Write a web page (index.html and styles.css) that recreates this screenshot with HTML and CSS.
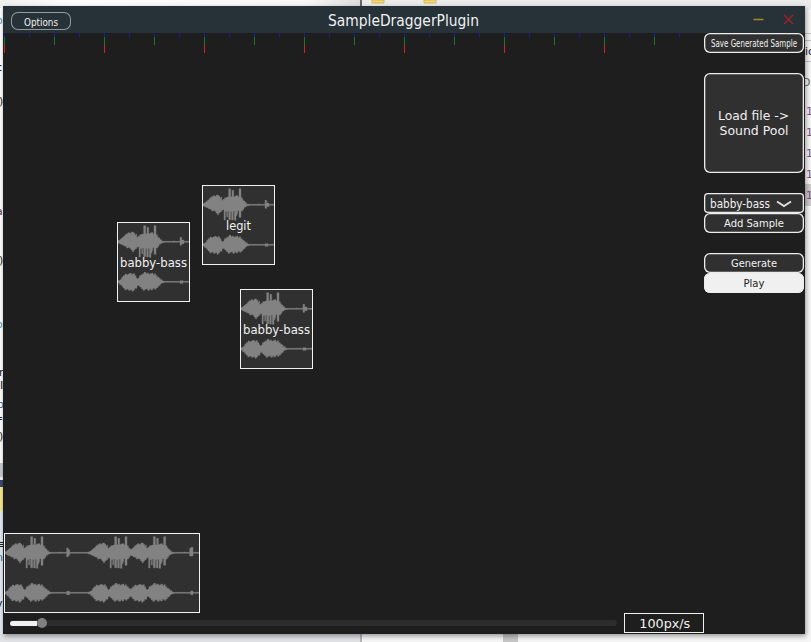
FILE: index.html
```html
<!DOCTYPE html>
<html lang="en">
<head>
<meta charset="utf-8">
<title>SampleDraggerPlugin</title>
<link rel="stylesheet" href="styles.css">
</head>
<body>
<svg class="backdrop" width="811" height="642" aria-hidden="true">
  <defs>
    <linearGradient id="sky" x1="0" x2="1" y1="0" y2="0"><stop offset="0" stop-color="#f0f0f0"/><stop offset=".2" stop-color="#fefefe"/><stop offset=".85" stop-color="#f8f8f8"/><stop offset="1" stop-color="#ddd"/></linearGradient>
  </defs>
  <rect width="811" height="642" fill="#f6f6f7"/>
  <rect width="360" height="8" fill="url(#sky)"/>
  <rect x="362" width="449" height="10" fill="#ebebeb"/>
  <path d="M361 0V8" stroke="#666" stroke-width="2"/>
  <path d="M361 634V642" stroke="#777" stroke-width="1"/>
  <path d="M372 0h12v3h-12zM424 0h12v3h-12z" fill="#f4d878" stroke="#d8b85a"/>
  <path d="M0 8h3v455H0z" fill="#fff"/>
  <path d="M0 463h3v14H0z" fill="#c9cbd3"/>
  <path d="M0 480h3v7H0z" fill="#3c4a70"/>
  <path d="M0 487h3v24H0z" fill="#f8ea88"/>
  <path d="M0 511h3v131H0z" fill="#e2ebf4"/>
  <path d="M0 634h360v8H0z" fill="#e2e3e7"/>
  <path d="M503 634h15v8h-15z" fill="#c6c6c6"/>
  <path d="M805 33.5h6M805 40.5h6M805 61.5h6" stroke="#c5c5c5"/>
  <path d="M805 184h6v22h-6z" fill="#ccc"/>
  <g class="fragments">
    <text x="-4" y="24" fill="#4a97b5">o</text><text x="-4" y="71">c</text><text x="-1" y="105">)</text>
    <text x="-4" y="215" fill="#633">a</text><text x="-1" y="264">)</text><text x="-4" y="328" fill="#4a97b5">o</text>
    <text x="-1" y="376">r</text><text x="0" y="389">I</text><text x="-3" y="408" fill="#36a">b</text><text x="-6" y="422">=</text><text x="-1" y="440">)</text>
    <text x="-4" y="548">≡</text><text x="-4" y="561" fill="#379">n</text><text x="-4" y="607">v</text>
    <text x="805" y="55">ic</text><text x="802" y="86" fill="#666">Da</text>
    <g fill="#855078"><text x="806" y="115">1</text><text x="806" y="136">1</text><text x="806" y="157">1</text><text x="806" y="178">1</text><text x="806" y="199">1</text></g>
  </g>
</svg>

<svg class="defs" aria-hidden="true">
  <defs>
    <path id="burst-top" d="M0 58 8 54 15 48 23 42 24 38H28V35H33V32H38V34H43V30H50V34H54V40H57V36H59V46H63V43H68V38H75V36H80V11H86V35H90V16H95V36H98V33H102V32H108V36H111V11H117V38H121V44H124V48H129V53H134V57L142 59V61L134 63 130 67H126V73H122V78H117V97H111V77H107V86H105V92H102V106H97V79H94V105H89V80H86V104H80V78H77V96H74V80H70V105H66V74H62V76H59V80H54V84H50V89H46V84H42V79H38V76H34V78H29V73H24V71H19V68H13V66H8V63H0Z"/>
    <path id="burst-low" d="M0 178 8 175 14 171V166H18V161H24V156H29V159H33V156H38V154H43V157H48V155H53V161H57V166L62 171 67 166V161H72V158H77V155H81V151H87V155H91V153H95V157H99V155H104V153H108V158H112V155H116V161H121V166H126V169H130V173H136V177L142 179V181L136 183 130 186V190H126V193H122V198H117V202H113V199H107V204H102V200H98V205H92V200H88V202H83V205H78V200H73V195H68V191L62 190 60 194V199H53V204H49V208H45V203H40V205H34V201H29V203H23V198H18V193H14V188H8V184L0 182Z"/>
    <symbol id="sample-wave" viewBox="0 0 219 240">
      <use href="#burst-top"/><use href="#burst-low"/>
      <path d="M138 58H168V57H173V58H189V46H194V54H201V58H219V61H201V65H194V70H189V61H138ZM138 178H189V176H198V178H219V181H198V184H189V181H138Z"/>
    </symbol>
    <symbol id="mix-wave" viewBox="0 0 588 240">
      <use href="#burst-top"/><use href="#burst-low"/>
      <path d="M138 58H168V57H173V58H188V45H193V50H197V58H252V61H197V67H193V71H188V61H138ZM138 178H188V175H197V178H252V181H197V185H188V181H138Z"/>
      <use href="#burst-top" x="252"/><use href="#burst-low" x="252"/>
      <use href="#burst-top" x="368"/><use href="#burst-low" x="368"/>
      <path d="M504 58H540V57H544V58H557V46H561V43H567V58H588V61H567V69H557V61H504ZM504 178H560V174H567V178H588V181H567V185H560V181H504Z"/>
    </symbol>
    <pattern id="ticks" width="100" height="22" patternUnits="userSpaceOnUse">
      <path d="M0 0h1v4H0zM25 0h1v4h-1zM50 0h1v4h-1zM75 0h1v4h-1z" fill="#1a18ae"/>
      <path d="M12 0h1v2h-1zM19 0h1v2h-1zM37 0h1v2h-1zM62 0h1v2h-1zM87 0h1v2h-1z" fill="#1a184c"/>
      <path d="M0 4h1v8H0zM50 4h1v8h-1z" fill="#147c20"/>
      <path d="M0 12h1v8H0z" fill="#d52027"/>
    </pattern>
  </defs>
</svg>

<main class="window">
  <header class="titlebar">
    <button class="btn options"><svg class="label"><text x="50%" y="13.5" textLength="34" lengthAdjust="spacingAndGlyphs">Options</text></svg></button>
    <h1 class="title"><svg class="label"><text x="50%" y="20" textLength="151" lengthAdjust="spacingAndGlyphs">SampleDraggerPlugin</text></svg></h1>
    <svg class="controls" width="44" height="16"><path d="M1.5 13.5H11.500" stroke="#a58c1c" stroke-width="1.5"/><path d="M32 9 41 18M41 9 32 18" stroke="#a91e2b" stroke-width="1.3"/></svg>
  </header>

  <div class="body">
    <section class="canvas">
      <svg class="ruler" width="700" height="22"><rect width="700" height="22" fill="url(#ticks)"/></svg>
      <div class="clip clip-a"><svg class="wave"><use href="#sample-wave"/></svg><svg class="label"><text x="50%" y="45" textLength="67" lengthAdjust="spacingAndGlyphs">babby-bass</text></svg></div>
      <div class="clip clip-b"><svg class="wave"><use href="#sample-wave"/></svg><svg class="label"><text x="50%" y="45" textLength="25" lengthAdjust="spacingAndGlyphs">legit</text></svg></div>
      <div class="clip clip-c"><svg class="wave"><use href="#sample-wave"/></svg><svg class="label"><text x="50%" y="45" textLength="67" lengthAdjust="spacingAndGlyphs">babby-bass</text></svg></div>
    </section>
    <aside class="sidebar">
      <button class="btn save"><svg class="label"><text x="50%" y="14" textLength="86" lengthAdjust="spacingAndGlyphs">Save Generated Sample</text></svg></button>
      <button class="btn load"><svg class="label"><text x="49.500%" y="47" textLength="71" lengthAdjust="spacingAndGlyphs">Load file -&gt;</text><text x="50%" y="62" textLength="69" lengthAdjust="spacingAndGlyphs">Sound Pool</text></svg></button>
      <div class="group">
        <button class="btn select"><svg class="label"><text x="36" y="15" textLength="60" lengthAdjust="spacingAndGlyphs">babby-bass</text><path d="M73 8.500 80 13 87 8.500" fill="none" stroke="#dedede" stroke-width="2"/></svg></button>
        <button class="btn"><svg class="label"><text x="50%" y="14" textLength="60" lengthAdjust="spacingAndGlyphs">Add Sample</text></svg></button>
      </div>
      <div class="group">
        <button class="btn"><svg class="label"><text x="50%" y="14" textLength="46" lengthAdjust="spacingAndGlyphs">Generate</text></svg></button>
        <button class="btn play"><svg class="label"><text x="50%" y="14" textLength="21" lengthAdjust="spacingAndGlyphs">Play</text></svg></button>
      </div>
    </aside>
  </div>

  <section class="result"><svg class="wave"><use href="#mix-wave"/></svg></section>
  <footer class="zoombar">
    <div class="track"><div class="fill"></div><div class="thumb"></div></div>
    <div class="readout"><svg class="label"><text x="51%" y="14" textLength="51" lengthAdjust="spacingAndGlyphs">100px/s</text></svg></div>
  </footer>
</main>
</body>
</html>
```
FILE: styles.css
```css
* { box-sizing: border-box; }

body {
  margin: 0;
  width: 811px;
  height: 642px;
  padding: 6px 6px 8px 3px;
  overflow: hidden;
  font-family: "DejaVu Sans", sans-serif;
}

.backdrop { position: absolute; left: 0; top: 0; z-index: -1; }
.fragments { font-size: 11px; fill: #222; }
.defs { position: absolute; width: 0; height: 0; }

.window {
  display: flex;
  flex-direction: column;
  width: 802px;
  height: 628px;
  background: #1e1e1e;
  box-shadow: 1px 2px 5px rgba(0, 0, 0, .4);
}

.titlebar {
  display: grid;
  grid-template-columns: 60px 1fr 44px;
  height: 27px;
  padding: 0 9px 0 8px;
  background: #263238;
}

.title { margin: 0 0 0 -16px; height: 27px; font-size: 15px; font-weight: 400; }
.controls { height: 27px; }

.label { display: block; width: 100%; height: 100%; overflow: visible; }
.label text { fill: #f0f0f0; text-anchor: middle; }

.btn {
  display: block;
  width: 100px;
  height: 20px;
  padding: 0;
  border: 0;
  border-radius: 6px;
  background: #303030;
  box-shadow: inset 0 0 0 1.3px #ededed;
  font: 11px "DejaVu Sans", sans-serif;
}

.options {
  width: 60px;
  height: 18px;
  margin-top: 6px;
  border-radius: 7px;
  background: #263238;
  box-shadow: inset 0 0 0 1px #929a9d;
  font-size: 10px;
}

.body { display: flex; height: 500px; }
.canvas { position: relative; width: 701px; padding-left: 1px; }
.ruler { display: block; }

.clip {
  position: absolute;
  width: 73px;
  height: 80px;
  background: #303030;
  font-size: 12.5px;
}
.clip::after, .result::after { content: ""; position: absolute; inset: 0; border: 1px solid #f2f2f2; }
.clip .label { position: absolute; inset: 0; }
.clip-a { left: 114px; top: 189px; }
.clip-b { left: 199px; top: 152px; }
.clip-c { left: 237px; top: 256px; }

.wave { display: block; width: 100%; height: 100%; fill: #828282; stroke: #828282; stroke-width: 1.2; }

.sidebar { display: flex; flex-direction: column; gap: 20px; width: 100px; }
.save { font-size: 10px; }
.load { height: 100px; font-size: 13px; }
.select { border-radius: 4px; font-size: 12px; }
.play { background: #f0f0f0; }
.play .label text { fill: #222; }

.result {
  position: relative;
  width: 196px;
  height: 80px;
  margin-left: 1px;
  background: #303030;
}

.zoombar { display: flex; height: 21px; padding-left: 7px; }
.track {
  display: flex;
  align-items: center;
  width: 607px;
  height: 6px;
  margin: 7px 7px 0 0;
  border-radius: 3px;
  background: #2c2c2c;
}
.fill { width: 27px; height: 5px; border-radius: 3px 0 0 3px; background: #f0f0f0; }
.thumb { width: 10px; height: 10px; border-radius: 50%; background: #808080; }
.readout { width: 80px; height: 20px; border: 1px solid #f0f0f0; font-size: 13px; }
```
